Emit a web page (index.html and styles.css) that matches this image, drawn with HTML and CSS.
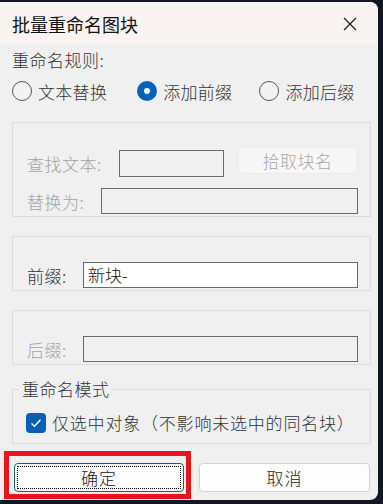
FILE: index.html
```html
<!DOCTYPE html>
<html lang="zh-CN">
<head>
    <meta charset="UTF-8">
    <meta name="viewport" content="width=device-width, initial-scale=1.0">
    <title>批量重命名图块</title>
    <link rel="stylesheet" href="styles.css">
</head>
<body>
    <div class="window">
        <div class="titlebar">
            <span class="title">批量重命名图块</span>
            <svg class="close" width="14" height="14" viewBox="0 0 14 14">
                <path d="M1 1 L13 13 M13 1 L1 13" stroke="#222" stroke-width="1.3" fill="none"/>
            </svg>
        </div>
        <div class="content">
            <div class="rule-label">重命名规则:</div>
            <div class="radios">
                <label class="radio"><span class="dot"></span>文本替换</label>
                <label class="radio checked"><span class="dot"></span>添加前缀</label>
                <label class="radio"><span class="dot"></span>添加后缀</label>
            </div>

            <div class="group group-replace">
                <div class="row row-find">
                    <span class="field-label disabled">查找文本:</span>
                    <div class="input input-find disabled"></div>
                    <button class="pick" disabled>拾取块名</button>
                </div>
                <div class="row row-to">
                    <span class="field-label disabled">替换为:</span>
                    <div class="input grow disabled"></div>
                </div>
            </div>

            <div class="group group-short">
                <div class="row">
                    <span class="field-label">前缀:</span>
                    <div class="input grow">新块-</div>
                </div>
            </div>

            <div class="group group-short">
                <div class="row">
                    <span class="field-label disabled">后缀:</span>
                    <div class="input grow disabled"></div>
                </div>
            </div>

            <fieldset class="mode">
                <legend>重命名模式</legend>
                <label class="check">
                    <span class="box">
                        <svg width="14" height="14" viewBox="0 0 14 14">
                            <path d="M2.5 7.5 L5.5 10.3 L11.5 3.8" stroke="#fff" stroke-width="1.4" fill="none"/>
                        </svg>
                    </span>
                    仅选中对象（不影响未选中的同名块）
                </label>
            </fieldset>

            <div class="buttons">
                <div class="ok-wrap">
                    <button class="btn ok"><span class="focus">确定</span></button>
                    <div class="highlight"></div>
                </div>
                <button class="btn">取消</button>
            </div>
        </div>
    </div>
</body>
</html>
```

FILE: styles.css
```css
body {
    margin: 0;
    background-color: #121522;
    font-family: "Noto Sans CJK SC", "Microsoft YaHei", sans-serif;
    font-weight: 300;
    color: #333;
    overflow: hidden;
}
.window {
    margin-top: 2px;
    width: 378px;
    height: 498px;
    background-color: #f0f0f0;
    border-radius: 0 8px 8px 0;
    overflow: hidden;
}
.titlebar {
    height: 42px;
    background-color: #f9f4f1;
    display: flex;
    align-items: center;
    justify-content: space-between;
    padding: 0 19px 0 12px;
}
.title {
    font-size: 18px;
    font-weight: 400;
    color: #111;
    margin-top: 1px;
}
.close {
    margin-top: 1px;
    margin-right: 2px;
}
.content {
    padding: 5px 7px 0 12px;
}
.rule-label {
    font-size: 17px;
    line-height: 22px;
    letter-spacing: 0.5px;
}
.radios {
    display: flex;
    margin-top: 9px;
    height: 22px;
    align-items: center;
}
.radio {
    display: flex;
    align-items: center;
    gap: 6px;
    font-size: 17px;
    letter-spacing: 0.3px;
}
.radio:nth-child(2) {
    margin-left: 30px;
}
.radio:nth-child(3) {
    margin-left: 27px;
}
.dot {
    width: 18px;
    height: 18px;
    border: 1px solid #555;
    border-radius: 50%;
    box-sizing: content-box;
    background-color: #f3f3f3;
}
.radio.checked .dot {
    width: 6px;
    height: 6px;
    border: 7px solid #0a62b8;
    background-color: #fff;
}
.group {
    border: 1px solid #dcdcdc;
    padding: 0 12px 2px 14px;
}
.group-replace {
    margin-top: 20px;
    height: 95px;
    box-sizing: border-box;
    padding-top: 27px;
}
.group-short {
    margin-top: 19px;
    height: 55px;
    box-sizing: border-box;
    padding-top: 25px;
}
.row {
    display: flex;
    align-items: center;
}
.row-to {
    margin-top: 11px;
}
.field-label {
    font-size: 17px;
    width: 56px;
    flex-shrink: 0;
    letter-spacing: 0.5px;
}
.row-find .field-label {
    width: 92px;
}
.row-to .field-label {
    width: 74px;
}
.field-label.disabled {
    color: #a3a3a3;
}
.input {
    height: 26px;
    box-sizing: border-box;
    border: 1px solid #6a6a6a;
    background-color: #fff;
    font-size: 17px;
    line-height: 24px;
    padding-left: 4px;
    color: #111;
}
.input.disabled {
    background-color: #f0f0f0;
}
.input-find {
    width: 105px;
    height: 27px;
}
.grow {
    flex: 1;
}
.pick {
    margin-left: 14px;
    margin-top: -6px;
    width: 119px;
    height: 27px;
    border: 1px solid #ececec;
    border-radius: 4px;
    background-color: #f7f7f7;
    color: #a8a8a8;
    font-family: inherit;
    font-weight: 300;
    font-size: 17px;
    letter-spacing: 0.5px;
    padding: 0;
}
.mode {
    margin: 13px 0 0 0;
    border: 1px solid #dcdcdc;
    padding: 0 12px 8px 13px;
}
.mode legend {
    font-size: 17px;
    line-height: 22px;
    padding: 0 3px;
    margin-left: -7px;
    letter-spacing: 0.5px;
}
.check {
    display: flex;
    align-items: center;
    gap: 6px;
    font-size: 17px;
    margin-top: 10px;
    letter-spacing: 0.8px;
}
.box {
    width: 20px;
    height: 20px;
    border-radius: 4px;
    background-color: #0a5fb4;
    display: flex;
    align-items: center;
    justify-content: center;
}
.buttons {
    display: flex;
    margin-top: 19px;
    padding-left: 2px;
}
.ok-wrap {
    position: relative;
}
.btn {
    width: 171px;
    height: 29px;
    border: 1px solid #d2d2d2;
    border-radius: 4px;
    background-color: #fdfdfd;
    font-family: inherit;
    font-weight: 300;
    font-size: 17px;
    color: #222;
    padding: 0;
    letter-spacing: 1px;
}
.buttons > .btn {
    margin-left: 15px;
}
.btn.ok {
    width: 170px;
    border: 1px solid #1e5f6e;
    padding: 2px;
}
.focus {
    display: flex;
    align-items: center;
    justify-content: center;
    height: 100%;
    border: 1px dotted #000;
    box-sizing: border-box;
}
.highlight {
    position: absolute;
    left: -10px;
    top: -12px;
    width: 187px;
    height: 48px;
    border: 5px solid #e8141a;
    box-sizing: border-box;
}
```
